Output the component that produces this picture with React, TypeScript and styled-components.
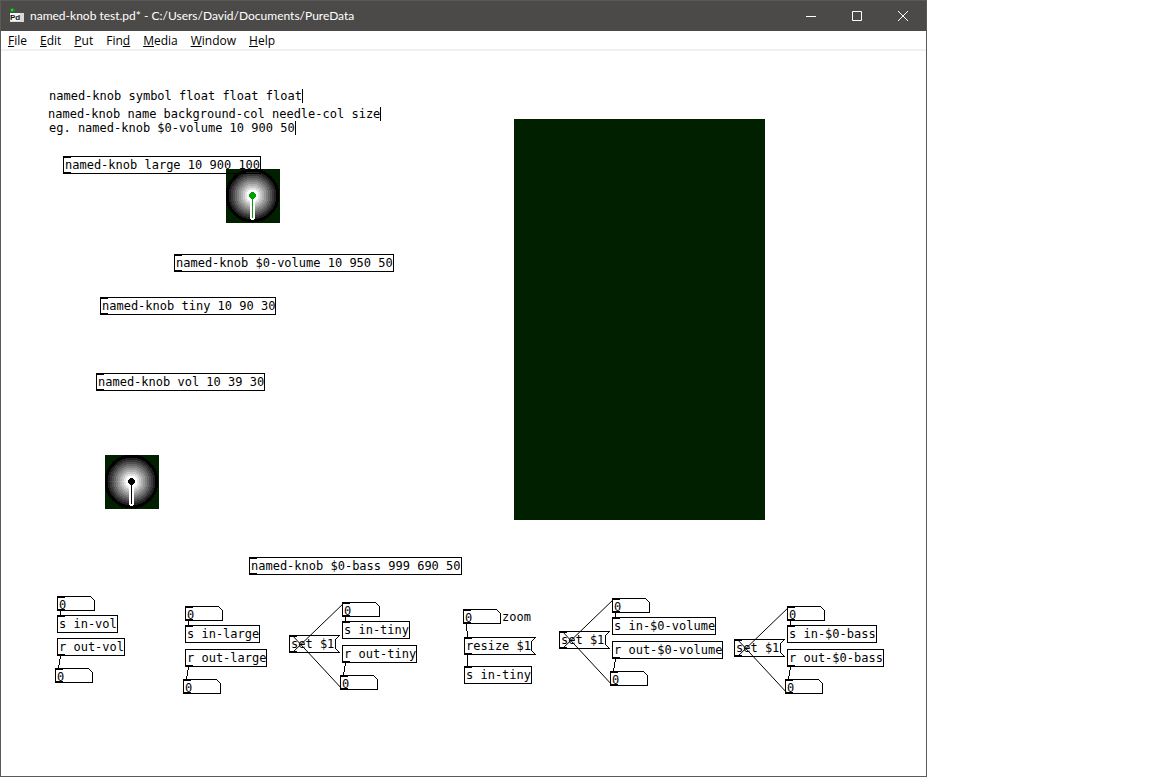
import React from "react";
import styled, { createGlobalStyle, css } from "styled-components";

const CELL = 7;

const GlobalStyle = createGlobalStyle`
  * { box-sizing: border-box; }
  body { margin: 0; background: #fff; }
`;

const Window = styled.main`
  display: flex;
  flex-direction: column;
  min-height: 100vh;
  margin-right: 225px;
  border: 1px solid #5a5a58;
  background: #fff;
  font-family: "Open Sans", "Noto Sans", sans-serif;
  font-size: 12px;
  color: #000;
`;

const TitleBar = styled.header`
  display: flex;
  align-items: center;
  height: 30px;
  padding-left: 9px;
  gap: 6px;
  background: #4c4a48;
  color: #fff;
`;

const Title = styled.h1`
  flex: 1;
  margin: 0;
  font-family: Lato, "Open Sans", sans-serif;
  font-size: 12px;
  font-weight: 400;
  line-height: 16px;
  white-space: nowrap;
`;

const WindowControls = styled.div`
  display: flex;
`;

const WindowButton = styled.button`
  display: flex;
  align-items: center;
  justify-content: center;
  width: 46px;
  height: 28px;
  padding: 0;
  border: 0;
  background: none;
  color: #fff;
`;

const MenuBar = styled.nav`
  display: flex;
  height: 20px;
  gap: 13px;
  padding: 1px 0 0 7px;
  border-bottom: 2px solid #f0f0f0;
`;

const MenuButton = styled.button`
  padding: 0;
  border: 0;
  background: none;
  font: inherit;
  line-height: 17px;
  color: inherit;
  white-space: nowrap;
`;

const Patch = styled.section`
  position: relative;
  flex: 1;
  font-family: "DejaVu Sans Mono", monospace;
  font-size: 12px;
  line-height: 16px;
`;

type Spot = { $x: number; $y: number };

const placed = css<Spot>`
  position: absolute;
  left: ${(p) => p.$x}px;
  top: ${(p) => p.$y}px;
`;

const Comment = styled.p<Spot & { $cells: number; $caret?: boolean }>`
  ${placed}
  min-width: ${(p) => p.$cells * CELL + 3}px;
  height: 14px;
  margin: 0;
  line-height: 14px;
  white-space: nowrap;
  border-right: ${(p) => (p.$caret ? "1px solid #000" : "0")};
`;

const portBar = css`
  content: "";
  position: absolute;
  left: 0;
  width: 7px;
  height: 1px;
  background: #000;
`;

const ports = css<{ $inlet?: boolean; $outlet?: boolean }>`
  &::before { ${portBar} top: 0; display: ${(p) => (p.$inlet ? "block" : "none")}; }
  &::after { ${portBar} bottom: 0; display: ${(p) => (p.$outlet ? "block" : "none")}; }
`;

const ObjectBox = styled.div<Spot & { $cells: number; $inlet?: boolean; $outlet?: boolean }>`
  ${placed}
  ${ports}
  min-width: ${(p) => p.$cells * CELL + 5}px;
  height: 18px;
  padding-left: 1px;
  border: 1px solid #000;
  white-space: nowrap;
`;

const MessageButton = styled.button<Spot & { $cells: number }>`
  ${placed}
  width: ${(p) => p.$cells * CELL + 9}px;
  height: 18px;
  padding: 0 0 0 2px;
  border: 0;
  background: none;
  color: #000;
  font: inherit;
  line-height: 18px;
  text-align: left;
  white-space: nowrap;
`;

const NumberField = styled.label<Spot>`
  ${placed}
  display: block;
  width: 38px;
  height: 15px;
`;

const NumberInput = styled.input`
  display: block;
  width: 36px;
  height: 15px;
  padding: 2px 0 0 2px;
  border: 0;
  background: none;
  color: #000;
  font: inherit;
  line-height: 13px;
`;

const Outline = styled.svg`
  position: absolute;
  inset: 0;
  pointer-events: none;
`;

const Wires = styled.svg`
  position: absolute;
  inset: 0;
  width: 100%;
  height: 100%;
  pointer-events: none;
`;

const Panel = styled.div<Spot>`
  ${placed}
  width: 251px;
  height: 401px;
  background: #002000;
`;

const KnobDrawing = styled.svg<Spot>`
  ${placed}
  display: block;
`;

const RINGS: [number, string][] = [
  [27, "#000000"], [24, "#202020"], [22, "#383838"], [20, "#505050"], [18, "#686868"],
  [16, "#808080"], [14, "#989898"], [12, "#b0b0b0"], [10, "#c8c8c8"], [8, "#e4e4e4"], [6, "#ffffff"],
];

function Knob({ x, y, needle, label }: { x: number; y: number; needle: string; label: string }) {
  return (
    <KnobDrawing $x={x} $y={y} width="54" height="54" viewBox="0 0 54 54" shapeRendering="crispEdges" role="img" aria-label={label}>
      <rect width="54" height="54" fill="#002000" />
      {RINGS.map(([r, fill]) => <circle key={r} cx="26.5" cy="26.5" r={r} fill={fill} />)}
      <path d="M24 27h5v23h-1v1h-3v-1h-1z" fill="#fff" />
      <path d="M26 27h1v22h-1z" fill={needle} />
      <path d="M25 23h3v1h1v1h1v3h-1v1h-1v1h-3v-1h-1v-1h-1v-3h1v-1h1z" fill={needle} />
    </KnobDrawing>
  );
}

function Obj({ x, y, text, inlet, outlet }: { x: number; y: number; text: string; inlet?: boolean; outlet?: boolean }) {
  return <ObjectBox $x={x} $y={y} $cells={text.length} $inlet={inlet} $outlet={outlet}>{text}</ObjectBox>;
}

function Message({ x, y, text }: { x: number; y: number; text: string }) {
  const w = text.length * CELL + 9;
  return (
    <MessageButton $x={x} $y={y} $cells={text.length}>
      <Outline width={w} height="18" fill="none" stroke="#000" shapeRendering="crispEdges">
        <path d={`M${w} .5H.5V17.5H${w}M0 1.5H8M0 16.5H8`} />
        <path d={`M${w - 0.5} .5L${w - 4.5} 4.5V13.5L${w - 0.5} 17.5`} />
      </Outline>
      {text}
    </MessageButton>
  );
}

function NumberBox({ x, y, name }: { x: number; y: number; name: string }) {
  return (
    <NumberField $x={x} $y={y}>
      <Outline width="38" height="15" fill="none" stroke="#000" shapeRendering="crispEdges">
        <path d="M.5 .5H33.5L37.5 4.5V14.5H.5ZM0 1.5H8M0 13.5H8" />
      </Outline>
      <NumberInput type="text" inputMode="decimal" defaultValue="0" aria-label={name} />
    </NumberField>
  );
}

type Channel = { name: string; x: number; y: number; dy: number; loop?: boolean };

const CHANNELS: Channel[] = [
  { name: "vol", x: 56, y: 545, dy: 0 },
  { name: "large", x: 184, y: 555, dy: 1 },
  { name: "tiny", x: 341, y: 551, dy: 1, loop: true },
  { name: "$0-volume", x: 611, y: 547, dy: 1, loop: true },
  { name: "$0-bass", x: 786, y: 555, dy: 1, loop: true },
];

const OBJECTS = [
  { x: 62, y: 105, text: "named-knob large 10 900 100" },
  { x: 173, y: 203, text: "named-knob $0-volume 10 950 50" },
  { x: 99, y: 246, text: "named-knob tiny 10 90 30" },
  { x: 95, y: 322, text: "named-knob vol 10 39 30" },
  { x: 248, y: 506, text: "named-knob $0-bass 999 690 50" },
];

const COMMENTS = [
  { x: 48, y: 38, text: "named-knob symbol float float float", caret: true },
  { x: 47, y: 56, text: "named-knob name background-col needle-col size", caret: true },
  { x: 48, y: 70, text: "eg. named-knob $0-volume 10 900 50", caret: true },
  { x: 501, y: 559, text: "zoom", caret: false },
];

const MENUS: [string, string, string][] = [
  ["", "F", "ile"], ["", "E", "dit"], ["", "P", "ut"], ["Fin", "d", ""],
  ["", "M", "edia"], ["", "W", "indow"], ["", "H", "elp"],
];

function ChannelStrip({ name, x, y, dy, loop }: Channel) {
  return (
    <>
      <NumberBox x={x} y={y} name={`in-${name}`} />
      <Obj x={x} y={y + 19} text={`s in-${name}`} inlet />
      <Obj x={x} y={y + 42 + dy} text={`r out-${name}`} outlet />
      <NumberBox x={x - 2} y={y + 72 + dy} name={`out-${name}`} />
      {loop && <Message x={x - 53} y={y + 33} text="set $1" />}
    </>
  );
}

function PdIcon() {
  return (
    <svg width="14" height="16" viewBox="0 0 14 16" aria-hidden="true">
      <rect x="0" y="5" width="14" height="9" fill="#d8d8d8" />
      <rect x="0" y="5" width="10" height="8" fill="#f4f4f4" />
      <path d="M1 0h3v1h1v2h-1v1h-3v-1h-1v-2h1z" fill="#128a1e" />
      <rect x="1" y="1" width="2" height="2" fill="#2fd040" />
      <path d="M4 4h1v1h-1z" fill="#128a1e" />
      <text x="0" y="12" fontFamily="Liberation Sans" fontSize="8" fontWeight="700" fill="#111">Pd</text>
    </svg>
  );
}

export default function App() {
  return (
    <>
      <GlobalStyle />
      <Window>
        <TitleBar>
          <PdIcon />
          <Title>named-knob test.pd* - C:/Users/David/Documents/PureData</Title>
          <WindowControls>
            <WindowButton aria-label="Minimize">
              <svg width="10" height="10"><path d="M0 5.5H10" stroke="currentColor" /></svg>
            </WindowButton>
            <WindowButton aria-label="Maximize">
              <svg width="10" height="10"><path d="M.5 .5H9.5V9.5H.5Z" fill="none" stroke="currentColor" /></svg>
            </WindowButton>
            <WindowButton aria-label="Close">
              <svg width="10" height="10"><path d="M0 0L10 10M10 0L0 10" stroke="currentColor" /></svg>
            </WindowButton>
          </WindowControls>
        </TitleBar>
        <MenuBar>
          {MENUS.map(([before, key, after]) => (
            <MenuButton key={before + key + after}>{before}<u>{key}</u>{after}</MenuButton>
          ))}
        </MenuBar>
        <Patch>
          <Panel $x={513} $y={68} />
          <Knob x={225} y={118} needle="#00a000" label="large knob" />
          <Knob x={104} y={404} needle="#000" label="vol knob" />
          {COMMENTS.map((c) => (
            <Comment key={c.text} $x={c.x} $y={c.y} $cells={c.text.length} $caret={c.caret}>{c.text}</Comment>
          ))}
          {OBJECTS.map((o) => <Obj key={o.text} {...o} inlet outlet />)}
          {CHANNELS.map((c) => <ChannelStrip key={c.name} {...c} />)}
          <NumberBox x={462} y={558} name="zoom" />
          <Message x={463} y={586} text="resize $1" />
          <Obj x={463} y={615} text="s in-tiny" inlet />
          <Wires stroke="#000">
            {CHANNELS.map(({ name, x, y, dy, loop }) => (
              <React.Fragment key={name}>
                <path shapeRendering="crispEdges" d={`M${x + 3.5} ${y + 15}v4M${x + 3.5} ${y + 60 + dy}L${x + 1.5} ${y + 72 + dy}`} />
                {loop && <path d={`M${x - 50} ${y + 51}L${x + 3} ${y}M${x + 1} ${y + 88}L${x - 50} ${y + 33}`} />}
              </React.Fragment>
            ))}
            <path shapeRendering="crispEdges" d="M465.5 573L466.5 586M466.5 604V615" />
          </Wires>
        </Patch>
      </Window>
    </>
  );
}
